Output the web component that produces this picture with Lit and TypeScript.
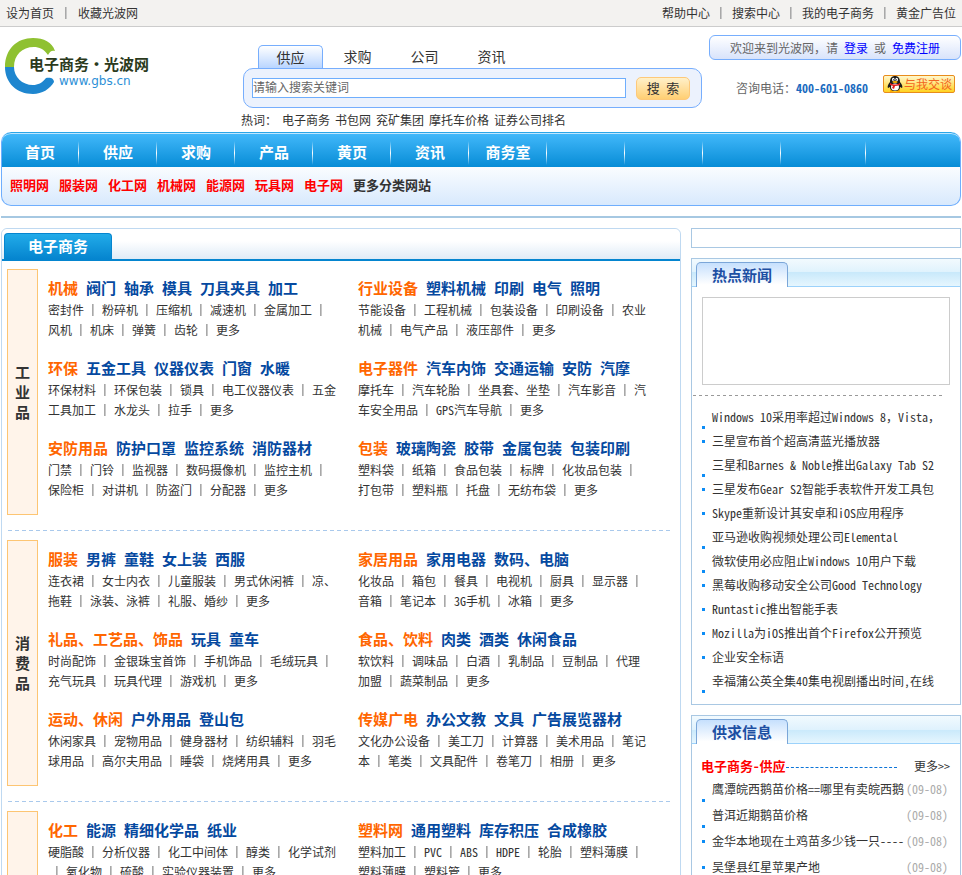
import { LitElement, html, css, svg } from "lit";
import { customElement } from "lit/decorators.js";
import { classMap } from "lit/directives/class-map.js";

interface Entry {
  heads: string[];
  items: string[];
}

interface Section {
  label: string;
  entries: Entry[];
}

const entry = (heads: string, items: string): Entry => ({
  heads: heads.split(" "),
  items: items.split("|"),
});

const SECTIONS: Section[] = [
  {
    label: "工业品",
    entries: [
      entry("机械 阀门 轴承 模具 刀具夹具 加工", "密封件|粉碎机|压缩机|减速机|金属加工|风机|机床|弹簧|齿轮|更多"),
      entry("行业设备 塑料机械 印刷 电气 照明", "节能设备|工程机械|包装设备|印刷设备|农业机械|电气产品|液压部件|更多"),
      entry("环保 五金工具 仪器仪表 门窗 水暖", "环保材料|环保包装|锁具|电工仪器仪表|五金工具加工|水龙头|拉手|更多"),
      entry("电子器件 汽车内饰 交通运输 安防 汽摩", "摩托车|汽车轮胎|坐具套、坐垫|汽车影音|汽车安全用品|GPS汽车导航|更多"),
      entry("安防用品 防护口罩 监控系统 消防器材", "门禁|门铃|监视器|数码摄像机|监控主机|保险柜|对讲机|防盗门|分配器|更多"),
      entry("包装 玻璃陶瓷 胶带 金属包装 包装印刷", "塑料袋|纸箱|食品包装|标牌|化妆品包装|打包带|塑料瓶|托盘|无纺布袋|更多"),
    ],
  },
  {
    label: "消费品",
    entries: [
      entry("服装 男裤 童鞋 女上装 西服", "连衣裙|女士内衣|儿童服装|男式休闲裤|凉、拖鞋|泳装、泳裤|礼服、婚纱|更多"),
      entry("家居用品 家用电器 数码、电脑", "化妆品|箱包|餐具|电视机|厨具|显示器|音箱|笔记本|3G手机|冰箱|更多"),
      entry("礼品、工艺品、饰品 玩具 童车", "时尚配饰|金银珠宝首饰|手机饰品|毛绒玩具|充气玩具|玩具代理|游戏机|更多"),
      entry("食品、饮料 肉类 酒类 休闲食品", "软饮料|调味品|白酒|乳制品|豆制品|代理加盟|蔬菜制品|更多"),
      entry("运动、休闲 户外用品 登山包", "休闲家具|宠物用品|健身器材|纺织辅料|羽毛球用品|高尔夫用品|睡袋|烧烤用具|更多"),
      entry("传媒广电 办公文教 文具 广告展览器材", "文化办公设备|美工刀|计算器|美术用品|笔记本|笔类|文具配件|卷笔刀|相册|更多"),
    ],
  },
  {
    label: "原材料",
    entries: [
      entry("化工 能源 精细化学品 纸业", "硬脂酸|分析仪器|化工中间体|醇类|化学试剂|氧化物|硫酸|实验仪器装置|更多"),
      entry("塑料网 通用塑料 库存积压 合成橡胶", "塑料加工|PVC|ABS|HDPE|轮胎|塑料薄膜|塑料薄膜|塑料管|更多"),
    ],
  },
];

const NEWS: { title: string; low?: boolean }[] = [
  { title: "Windows 10采用率超过Windows 8，Vista，", low: true },
  { title: "三星宣布首个超高清蓝光播放器" },
  { title: "三星和Barnes & Noble推出Galaxy Tab S2", low: true },
  { title: "三星发布Gear S2智能手表软件开发工具包" },
  { title: "Skype重新设计其安卓和iOS应用程序" },
  { title: "亚马逊收购视频处理公司Elemental", low: true },
  { title: "微软使用必应阻止Windows 10用户下载", low: true },
  { title: "黑莓收购移动安全公司Good Technology" },
  { title: "Runtastic推出智能手表" },
  { title: "Mozilla为iOS推出首个Firefox公开预览" },
  { title: "企业安全标语" },
  { title: "幸福蒲公英全集40集电视剧播出时间,在线", low: true },
];

const SUPPLY: { title: string; low?: boolean }[] = [
  { title: "鹰潭皖西鹅苗价格==哪里有卖皖西鹅", low: true },
  { title: "普洱近期鹅苗价格", low: true },
  { title: "金华本地现在土鸡苗多少钱一只----" },
  { title: "吴堡县红星苹果产地" },
];

const NAV = ["首页", "供应", "求购", "产品", "黄页", "资讯", "商务室"];
const SITES = ["照明网", "服装网", "化工网", "机械网", "能源网", "玩具网", "电子网"];
const HOT = ["电子商务", "书包网", "兖矿集团", "摩托车价格", "证券公司排名"];

const sep = html`<span class="sep"></span>`;

// The half-width feature also narrows the Chinese comma, which has to stay a full em wide.
const fullComma = (text: string) =>
  text.split(/(，)/).map((part, i) => (i % 2 ? html`<span class="full">${part}</span>` : part));

const logo = svg`
  <path fill="#8fc131" d="M5 40 C5 22 17 11 33 11 C44 11 52 15 55 24 C52 23 50 24 48 28 C44 22 39 20 34 20 C22 20 14 28 14 40 Z"/>
  <path fill="#1e86cf" d="M5 40 C5 56 17 67 33 67 C42 67 50 62 54 55 C54 51 50 50 46 51 C42 56 38 58 33 58 C22 58 14 50 14 40 Z"/>`;

const penguin = svg`
  <path fill="#ffae00" d="M3 14 Q6 12 8 15 Q6 16 3 16 Z M13 14 Q10 12 8 15 Q10 16 13 16 Z"/>
  <path fill="#1b1b1b" d="M8 0 C11 0 13 2 13 6 C15 8 16 11 15 12 C14 12 14 11 13 11 C13 14 11 15 8 15 C5 15 3 14 3 11 C2 11 2 12 1 12 C0 11 1 8 3 6 C3 2 5 0 8 0 Z"/>
  <ellipse cx="8" cy="11" rx="4" ry="3.6" fill="#fff"/>
  <ellipse cx="6.3" cy="3.6" rx="1.3" ry="1.8" fill="#fff"/>
  <ellipse cx="9.7" cy="3.6" rx="1.3" ry="1.8" fill="#fff"/>
  <circle cx="6.6" cy="3.8" r=".6"/><circle cx="9.4" cy="3.8" r=".6"/>
  <ellipse cx="8" cy="6" rx="2.6" ry=".9" fill="#ffb400"/>
  <path fill="#e31c1c" d="M3 7 Q8 10 13 7 L13 9 Q10 10 8 10 L7 13 L5 12 L6 10 Q4 9 3 9 Z"/>`;

@customElement("app-root")
export class AppRoot extends LitElement {
  static styles = css`
    :host {
      display: block;
      height: 100vh;
      overflow: hidden;
      background: #fff;
      color: #333;
      font: 12px/20px "Noto Sans CJK SC", "Liberation Sans", sans-serif;
      /* half-width Latin forms, so that two letters take the room of one Chinese character */
      font-feature-settings: "hwid";
    }
    * { box-sizing: border-box; }
    a { color: inherit; text-decoration: none; }
    ul, h2, h3, p { margin: 0; padding: 0; font-weight: inherit; font-size: inherit; }
    ul { list-style: none; }
    .full { font-feature-settings: normal; }
    .sep {
      display: inline-block;
      width: 2px;
      height: 12px;
      margin: 0 8px;
      vertical-align: -1px;
      background: linear-gradient(90deg, #a8a8a8 50%, #c8c8c8 50%);
    }

    .topbar {
      display: flex;
      justify-content: space-between;
      padding: 0 6px;
      height: 27px;
      line-height: 26px;
      background: #f3f2f0;
      border-bottom: 1px solid #ccc;
    }
    .topbar .sep { margin: 0 10px; }
    .topbar .home .sep { margin: 0 11px; }
    .page { padding: 0 1px; }

    .header { display: flex; }
    .brand { width: 240px; flex: none; }
    .logo { display: block; width: 160px; height: 90px; margin-left: -1px; }
    .brand-name { font: bold 15px "Noto Sans CJK SC", sans-serif; fill: #2b3a1c; }
    .brand-url { font: 12px "DejaVu Sans", sans-serif; fill: #2c8fd6; font-feature-settings: normal; }

    .search { width: 461px; padding-top: 18px; }
    .tabs { display: flex; padding-left: 17px; gap: 2px; font-size: 14px; line-height: 23px; height: 23px; }
    .tab { width: 65px; text-align: center; }
    .tab.on {
      border: 1px solid #77aefd;
      border-bottom: 0;
      border-radius: 5px 5px 0 0;
      background: linear-gradient(#fff, #b9d5ff);
    }
    .search-box {
      display: flex;
      align-items: center;
      gap: 10px;
      height: 40px;
      margin-left: 2px;
      padding: 0 11px 0 8px;
      border: 1px solid #77aefd;
      border-radius: 10px;
      background: #ecf2fd;
    }
    .query {
      flex: 1;
      min-width: 0;
      height: 20px;
      padding: 0 0 4px;
      border: 1px solid #6faefd;
      background: #fff;
      color: #666;
      font: inherit;
      line-height: 14px;
    }
    .go {
      width: 54px;
      height: 23px;
      padding: 0;
      border: 1px solid #fdc97a;
      border-radius: 5px;
      background: linear-gradient(#fff0c9, #ffcf73);
      color: #333;
      font: 13px/20px "Noto Sans CJK SC", sans-serif;
      font-feature-settings: "hwid";
    }
    .hot { display: flex; gap: 5px; line-height: 24px; }

    .account { flex: 1; margin-left: 7px; padding-top: 8px; color: #666; }
    .welcome {
      height: 25px;
      line-height: 23px;
      text-align: center;
      border: 1px solid #77aefd;
      border-radius: 6px;
      background: linear-gradient(#fff, #d8e3fb);
    }
    .welcome a { color: #00f; }
    .contact { display: flex; justify-content: space-between; margin-top: 15px; padding: 0 6px 0 27px; line-height: 26px; }
    .phone { color: #1b6bc0; font-weight: bold; }
    .chat {
      display: flex;
      align-items: center;
      width: 72px;
      height: 18px;
      padding: 0 2px;
      border: 1px solid #e88c1c;
      border-radius: 2px;
      background: linear-gradient(#fff7cd, #ffd320);
      color: #f26522;
      line-height: 16px;
    }
    .penguin { width: 18px; height: 16px; flex: none; }

    .nav { border: 1px solid #6faefd; border-top: 0; border-radius: 10px; background: linear-gradient(#fff 40%, #d8e9fd); overflow: hidden; }
    .nav-main {
      display: flex;
      height: 35px;
      margin: 0 -1px;
      padding-top: 4px;
      border-top: 1px solid #2aa6e8;
      border-radius: 10px 10px 0 0;
      background: linear-gradient(#43b9fb, #078cd6);
      box-shadow: inset 0 1px 0 #bfe6ff;
      color: #fff;
      font-size: 15px;
      font-weight: bold;
      line-height: 30px;
    }
    .nav-item {
      width: 78px;
      text-align: center;
      background: linear-gradient(#fff0, #fff, #fff0) right 4px / 1px 24px no-repeat;
    }
    .nav-item.wide { width: 85px; }
    .nav-sub { display: flex; gap: 10px; height: 38px; padding-left: 8px; font-size: 13px; font-weight: bold; line-height: 36px; color: #f00; }
    .nav-sub .more { color: #333; }

    .rule { height: 2px; margin: 10px 0; background: #a6c8e2; }
    .columns { display: grid; grid-template-columns: minmax(0, 1fr) 270px; gap: 10px; align-items: start; }

    .panel { border: 1px solid #bfd9f1; border-radius: 6px; }
    .panel-head { display: flex; height: 32px; padding: 4px 2px 0; border-bottom: 2px solid #0585cf; background: linear-gradient(#fff 40%, #dfebf6); border-radius: 6px 6px 0 0; }
    .panel-title {
      width: 108px;
      line-height: 24px;
      text-align: center;
      color: #fff;
      font-size: 15px;
      font-weight: bold;
      border: 1px solid #0585cf;
      border-bottom: 0;
      border-radius: 4px 4px 0 0;
      background: linear-gradient(#22abe9, #0585cf);
    }
    .section { display: flex; padding: 8px 8px 15px 5px; }
    .divider { height: 1px; margin: 0 8px 1px 6px; background: repeating-linear-gradient(90deg, #a9c9ec 0 4px, #fff 4px 7px); }
    .label {
      display: flex;
      align-items: center;
      flex: none;
      width: 31px;
      min-height: 246px;
      padding: 0 7px;
      border: 1px solid #fdc573;
      background: #fff4ea;
      font-size: 15px;
      font-weight: bold;
      text-align: center;
    }
    .entries { display: grid; grid-template-columns: repeat(auto-fill, 290px); gap: 18px 20px; align-content: start; flex: 1; padding: 9px 0 0 10px; }
    .heads { display: flex; gap: 8px; margin-bottom: 2px; color: #0549a0; font-size: 15px; font-weight: bold; line-height: 20px; white-space: nowrap; }
    .heads a:first-child { color: #f60; }

    .banner { height: 20px; margin-bottom: 10px; border: 1px solid #a9c8e3; }
    .card { margin-bottom: 10px; padding-bottom: 11px; border: 1px solid #a9c8e3; }
    .card-head {
      height: 28px;
      padding: 3px 4px 0;
      border-bottom: 1px solid #9cd2fb;
      background: linear-gradient(#f2fafe, #dff2fd 50%, #c9e9fb 50%, #e6f6fe);
    }
    .card-title {
      width: 92px;
      height: 25px;
      line-height: 24px;
      text-align: center;
      color: #1d4fa3;
      font-size: 15px;
      font-weight: bold;
      border: 1px solid #7ba6d8;
      border-bottom: 0;
      border-radius: 5px 5px 0 0;
      background: linear-gradient(#c6e0fd, #fff 90%);
    }
    .photo { height: 88px; margin: 10px; border: 1px solid #ccc; }
    .dash { height: 1px; margin: 0 17px 9px 1px; background: repeating-linear-gradient(90deg, #999 0 3px, #fff 3px 6px); }
    .row { display: flex; align-items: center; height: 24px; padding: 0 10px; white-space: nowrap; }
    .row::before { content: ""; flex: none; width: 3px; height: 3px; margin-right: 7px; background: #0c8cf5; }
    .row.low::before { align-self: flex-end; }
    .supply .row { height: 26px; padding-right: 12px; }
    .row-title { flex: 1; min-width: 0; }
    .date { color: #aaa; }
    .supply-head { display: flex; align-items: center; padding: 12px 10px 0 9px; }
    .supply-title { color: #f00; font-size: 13px; font-weight: bold; }
    .dots { flex: 1; margin: 2px 17px 0 0; border-top: 1px dashed #0c74d8; }
  `;

  private section(s: Section, i: number) {
    return html`
      ${i ? html`<div class="divider"></div>` : ""}
      <div class="section">
        <h2 class="label">${s.label}</h2>
        <div class="entries">
          ${s.entries.map(
            (e) => html`<div>
              <h3 class="heads">${e.heads.map((h) => html`<a href="#">${h}</a>`)}</h3>
              <p>${e.items.map((t, n) => html`${n ? sep : ""}<a href="#">${t}</a>`)}</p>
            </div>`,
          )}
        </div>
      </div>`;
  }

  render() {
    return html`
      <div class="topbar">
        <div class="home"><a href="#">设为首页</a>${sep}<a href="#">收藏光波网</a></div>
        <div><a href="#">帮助中心</a>${sep}<a href="#">搜索中心</a>${sep}<a href="#">我的电子商务</a>${sep}<a href="#">黄金广告位</a></div>
      </div>
      <div class="page">
        <header class="header">
          <a class="brand" href="#">
            <svg class="logo" viewBox="0 0 160 90">
              ${logo}
              <text class="brand-name" x="29" y="43">电子商务·光波网</text>
              <text class="brand-url" x="59" y="58">www.gbs.cn</text>
            </svg>
          </a>
          <form class="search">
            <div class="tabs">
              <a class="tab on" href="#">供应</a><a class="tab" href="#">求购</a><a class="tab" href="#">公司</a><a class="tab" href="#">资讯</a>
            </div>
            <div class="search-box">
              <input class="query" type="text" aria-label="搜索" value="请输入搜索关键词" />
              <button class="go" type="button">搜 索</button>
            </div>
            <div class="hot"><span>热词：</span>${HOT.map((h) => html`<a href="#">${h}</a>`)}</div>
          </form>
          <div class="account">
            <div class="welcome">${fullComma("欢迎来到光波网，请")} <a href="#">登录</a> 或 <a href="#">免费注册</a></div>
            <div class="contact">
              <span>咨询电话：<span class="phone">400-601-0860</span></span>
              <a class="chat" href="#"><svg class="penguin" viewBox="0 0 16 16">${penguin}</svg>与我交谈</a>
            </div>
          </div>
        </header>

        <nav class="nav">
          <div class="nav-main">
            ${NAV.map((n) => html`<a class="nav-item" href="#">${n}</a>`)}
            ${[0, 1, 2, 3].map((n) => html`<span class=${classMap({ "nav-item": true, wide: n === 3 })}></span>`)}
          </div>
          <div class="nav-sub">
            ${SITES.map((n) => html`<a href="#">${n}</a>`)}<a class="more" href="#">更多分类网站</a>
          </div>
        </nav>
        <div class="rule"></div>

        <div class="columns">
          <main class="panel">
            <div class="panel-head"><h2 class="panel-title">电子商务</h2></div>
            ${SECTIONS.map((s, i) => this.section(s, i))}
          </main>
          <aside>
            <div class="banner"></div>
            <section class="card">
              <div class="card-head"><h2 class="card-title">热点新闻</h2></div>
              <div class="photo"></div>
              <div class="dash"></div>
              <ul>
                ${NEWS.map((n) => html`<li class=${classMap({ row: true, low: !!n.low })}><a href="#">${fullComma(n.title)}</a></li>`)}
              </ul>
            </section>
            <section class="card supply">
              <div class="card-head"><h2 class="card-title">供求信息</h2></div>
              <div class="supply-head">
                <h3 class="supply-title">电子商务-供应</h3>
                <span class="dots"></span>
                <a href="#">更多&gt;&gt;</a>
              </div>
              <ul>
                ${SUPPLY.map(
                  (n) => html`<li class=${classMap({ row: true, low: !!n.low })}>
                    <a class="row-title" href="#">${n.title}</a><span class="date">(09-08)</span>
                  </li>`,
                )}
              </ul>
            </section>
          </aside>
        </div>
      </div>
    `;
  }
}
